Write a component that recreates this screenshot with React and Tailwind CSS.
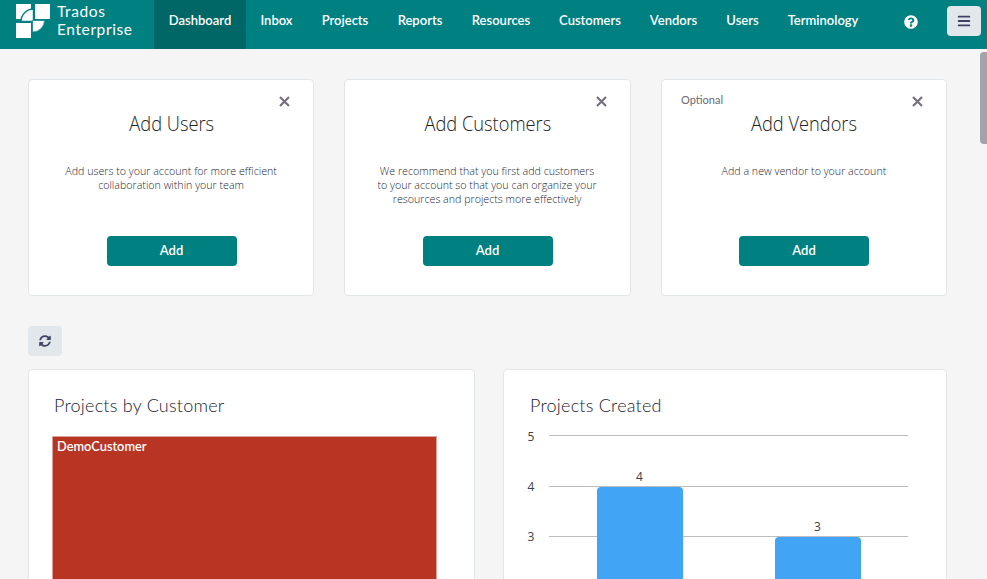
import { FaQuestionCircle, FaBars, FaSyncAlt } from "react-icons/fa";

const nav = [
  { label: "Dashboard", cls: "w-[92px] bg-[#006666]" },
  { label: "Inbox", cls: "w-[61px]" },
  { label: "Projects", cls: "w-[76px]" },
  { label: "Reports", cls: "w-[74px]" },
  { label: "Resources", cls: "w-[88px]" },
  { label: "Customers", cls: "w-[90px]" },
  { label: "Vendors", cls: "w-[77px]" },
  { label: "Users", cls: "w-[61px]" },
  { label: "Terminology", cls: "w-[100px]" },
];

const cards = [
  { title: "Add Users", lines: ["Add users to your account for more efficient", "collaboration within your team"], width: "w-[286px] pl-px" },
  {
    title: "Add Customers",
    lines: ["We recommend that you first add customers", "to your account so that you can organize your", "resources and projects more effectively"],
    width: "w-[287px]",
  },
  { title: "Add Vendors", lines: ["Add a new vendor to your account"], optional: true, width: "w-[286px]" },
];

function Logo() {
  return (
    <svg width="37" height="36" viewBox="0 0 37 36" className="shrink-0">
      <path d="M1 1H16V16H1Z" fill="#fff" />
      <path d="M20 1H35V16H20Z" fill="#fff" />
      <path d="M1 20H16V35H1Z" fill="#fff" />
      <path d="M6 18.500A12.500 12.500 0 0 1 18.500 6V18.500Z" fill="#fff" stroke="#008080" strokeWidth="1.400" />
      <path d="M17.500 17.500H29.500A12 11.500 0 0 1 17.500 29Z" fill="#fff" stroke="#008080" strokeWidth="0.700" />
    </svg>
  );
}

function Header() {
  return (
    <header className="flex h-[49px] w-full bg-[#008080] text-white">
      <div className="flex w-[154px] gap-[5px] pt-[3px] pl-[15px]">
        <Logo />
        <div className="-mt-px font-['Lato'] text-[15.5px] leading-[18px] tracking-[0.6px] whitespace-nowrap">
          Trados
          <br />
          Enterprise
        </div>
      </div>
      <nav className="flex">
        {nav.map((n) => (
          <a key={n.label} className={`flex h-[49px] justify-center pt-[10px] text-[13px] leading-[20px] font-semibold whitespace-nowrap ${n.cls}`}>
            {n.label}
          </a>
        ))}
      </nav>
      <FaQuestionCircle className="mt-[15px] ml-[31px] size-[14px]" />
      <button className="mt-[6px] ml-[29px] flex h-[30px] w-[34px] items-center justify-center rounded bg-[#e2e7eb] text-[#3f4262]">
        <FaBars className="size-[14px]" />
      </button>
    </header>
  );
}

function StepCard({ title, lines, optional, width }) {
  return (
    <section className={`flex h-[217px] shrink-0 flex-col items-center rounded border border-[#e2e6e9] bg-white ${width}`}>
      <div className="flex h-[31px] w-full justify-between pt-[12px] pr-[23px] pl-[19px]">
        <span className="text-[11px] leading-[16px] text-[#666b75]">{optional ? "Optional" : ""}</span>
        <svg width="11" height="11" viewBox="0 0 11 11" className="mt-[4px]">
          <path d="M1 1L10 10M10 1L1 10" stroke="#77717f" strokeWidth="2.2" />
        </svg>
      </div>
      <h2 className="origin-center scale-x-[0.87] font-['Open_Sans'] text-[21px] leading-[24px] font-light whitespace-nowrap text-[#222]">{title}</h2>
      <div className="mt-[29px] h-[72px] scale-x-[0.97] text-center font-['Open_Sans'] text-[11px] leading-[14px] font-light whitespace-nowrap text-[#222733]">
        {lines.map((l) => (
          <p key={l}>{l}</p>
        ))}
      </div>
      <button className="h-[30px] w-[130px] rounded bg-[#008080] pb-px text-[13px] font-semibold text-white">Add</button>
    </section>
  );
}

function Chart() {
  return (
    <svg width="390" height="152" viewBox="520 427 390 152" className="font-['Open_Sans'] text-[12px]">
      <g fill="#bdbdbd">
        <rect x="549" y="435" width="359" height="1" />
        <rect x="549" y="486" width="359" height="1" />
        <rect x="549" y="536" width="359" height="1" />
      </g>
      <rect x="597" y="487" width="86" height="100" rx="4" fill="#41a4f4" />
      <rect x="775" y="537" width="86" height="60" rx="4" fill="#41a4f4" />
      <g fill="#40404a" textAnchor="middle">
        <text x="531" y="441">5</text>
        <text x="531" y="491">4</text>
        <text x="531" y="541">3</text>
        <text x="639.5" y="481">4</text>
        <text x="817.5" y="531">3</text>
      </g>
    </svg>
  );
}

export default function App() {
  return (
    <div className="relative h-[579px] w-[987px] overflow-hidden bg-[#f5f5f5] font-['Lato',sans-serif]">
      <Header />
      <main className="pt-[30px] pl-[28px]">
        <div className="flex gap-[30px]">
          {cards.map((c) => (
            <StepCard key={c.title} {...c} />
          ))}
        </div>
        <button className="mt-[30px] flex h-[30px] w-[34px] items-center justify-center rounded bg-[#e2e7eb] text-[#3f4262]">
          <FaSyncAlt className="size-[12px]" />
        </button>
        <div className="mt-[13px] flex gap-[28px]">
          <section className="h-[260px] w-[447px] rounded border border-[#e2e6e9] bg-white">
            <h3 className="mt-[23px] ml-[25px] text-[18px] leading-[24px] font-light tracking-[0.23px] text-[#22232f]">Projects by Customer</h3>
            <div className="mt-[19px] ml-[23px] h-[190px] w-[385px] border border-[#dba39c] bg-[#b83524] pl-[4px] text-[12.8px] leading-[18px] font-semibold text-white">DemoCustomer</div>
          </section>
          <section className="h-[260px] w-[444px] rounded border border-[#e2e6e9] bg-white">
            <h3 className="mt-[23px] ml-[26px] text-[18px] leading-[24px] font-light tracking-[0.23px] text-[#22232f]">Projects Created</h3>
            <div className="mt-[10px] ml-[16px]">
              <Chart />
            </div>
          </section>
        </div>
      </main>
      <div className="absolute top-[52px] left-[980px] h-[92px] w-[9px] rounded-[4px] bg-[#a1a4ab]" />
    </div>
  );
}
